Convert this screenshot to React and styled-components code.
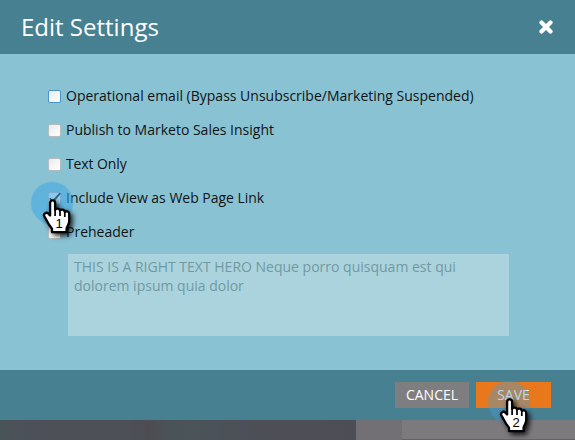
import React from "react";
import styled, { createGlobalStyle } from "styled-components";

const GlobalStyle = createGlobalStyle`
  * { box-sizing: border-box; }
  body { margin: 0; overflow: hidden; font-family: "Open Sans", "Noto Sans", sans-serif; }
`;

const Screen = styled.main`
  width: 575px;
  height: 440px;
  display: flex;
  flex-direction: column;
  overflow: hidden;
`;

const Header = styled.header`
  height: 54px;
  flex: none;
  display: flex;
  align-items: center;
  justify-content: space-between;
  padding: 0 22px 0 21px;
  background: #468091;
`;

const Title = styled.h1`
  margin: 0;
  color: #fff;
  font-size: 24px;
  line-height: 32px;
  font-weight: 400;
`;

const CloseButton = styled.button`
  display: flex;
  width: 14px;
  height: 14px;
  padding: 0;
  border: 0;
  background: none;
`;

const Body = styled.section`
  height: 316px;
  flex: none;
  padding: 25px 48px 0;
  background: #89c2d3;
`;

const Option = styled.label`
  position: relative;
  height: 34px;
  display: flex;
  align-items: center;
  gap: 5px;
  color: #101416;
  font-size: 14px;
  line-height: 20px;
  white-space: nowrap;
`;

const OptionLabel = styled.span`
  letter-spacing: ${(p) => p.$tracking || 0}px;
`;

const Box = styled.span`
  width: 13px;
  height: 13px;
  flex: none;
  border: 1px solid ${(p) => (p.$focused ? "#4a94cb" : "#b9bcbe")};
  border-radius: 2px;
  background: linear-gradient(135deg, #e9eaec, #fdfdfd 85%);
`;

const Preheader = styled.div`
  width: 441px;
  height: 82px;
  margin: 5px 0 0 20px;
  padding: 3px 5px 0 6px;
  background: #abd3dd;
  color: #709aa3;
  font-size: 14px;
  line-height: 19px;
  white-space: nowrap;
`;

const Footer = styled.footer`
  height: 50px;
  flex: none;
  display: flex;
  align-items: center;
  justify-content: flex-end;
  gap: 7px;
  padding-right: 24px;
  background: #468091;
`;

const Button = styled.button`
  position: relative;
  width: ${(p) => (p.$primary ? 75 : 74)}px;
  height: 26px;
  padding: 0;
  border: 0;
  background: ${(p) => (p.$primary ? "#e8781b" : "#7e7d80")};
  color: #fff;
  font: 14px/26px "Open Sans", sans-serif;
`;

const Backdrop = styled.div`
  height: 20px;
  display: grid;
  grid-template-columns: 356px 46px 1fr;
`;

const BackdropPart = styled.div`
  background: ${(p) => p.$fill};
  border-bottom: ${(p) => (p.$edge ? "1px solid #656367" : "0")};
`;

const Pointer = styled.svg`
  position: absolute;
  z-index: 2;
  left: ${(p) => p.$left}px;
  top: ${(p) => p.$top}px;
  width: 64px;
  height: 64px;
  overflow: visible;
  pointer-events: none;
`;

const HAND =
  "M7.1 16.5V4C7.1 .5 12.1 .5 12.1 4V10.8C13 9 16.5 9.3 17 11.4C18.4 10 21.4 10.5 21.8 12.8C23.6 11.6 26.2 12.6 26.2 15.2V22C26.2 25.2 24.2 27.2 23.6 29.4V33.2H9V29.7C6.8 27.2 4.8 23.8 3 20.2L1.3 17.4C0 14.8 3.2 12.8 5.2 14.4Z";

function StepPointer({ step, left, top, haloColor, haloOpacity }) {
  const shadow = `pointer-shadow-${step}`;
  const halo = `pointer-halo-${step}`;
  return (
    <Pointer $left={left} $top={top} viewBox="0 0 64 64" aria-hidden="true">
      <defs>
        <filter id={shadow} x="-40%" y="-40%" width="200%" height="200%">
          <feDropShadow dx="2.5" dy="2.5" stdDeviation="2.6" floodColor="#000" floodOpacity=".85" />
        </filter>
        <radialGradient id={halo}>
          <stop offset="0" stopColor={haloColor} stopOpacity={haloOpacity} />
          <stop offset=".92" stopColor={haloColor} stopOpacity={haloOpacity} />
          <stop offset="1" stopColor={haloColor} stopOpacity="0" />
        </radialGradient>
      </defs>
      <circle cx="22" cy="22" r="22" fill={`url(#${halo})`} />
      <g transform="translate(13 18)">
        <g filter={`url(#${shadow})`}>
          <path d={HAND} fill="#fff" stroke="#000" strokeWidth="2.3" strokeLinejoin="round" />
        </g>
        <path d="M12.1 10V17M17 11.2V17M21.8 12.8V18" fill="none" stroke="#000" strokeWidth="1.7" />
        <text x="16" y="29" textAnchor="middle" fill="#000" fontFamily="Liberation Sans, sans-serif" fontSize="13">
          {step}
        </text>
      </g>
    </Pointer>
  );
}

function CheckMark() {
  return (
    <svg width="11" height="11" viewBox="0 0 11 11" display="block" overflow="visible">
      <path d="M.8 5.4 3.8 8.6 11.2.2" fill="none" stroke="#1c2226" strokeWidth="2" />
    </svg>
  );
}

export default function App() {
  return (
    <>
      <GlobalStyle />
      <Screen>
        <Header>
          <Title>Edit Settings</Title>
          <CloseButton aria-label="Close">
            <svg width="14" height="14" viewBox="0 0 14 14">
              <path d="M2.5 2.5 11.5 11.5M11.5 2.5 2.5 11.5" stroke="#fff" strokeWidth="4.2" strokeLinecap="round" />
            </svg>
          </CloseButton>
        </Header>
        <Body>
          <Option><Box $focused /><OptionLabel>Operational email (Bypass Unsubscribe/Marketing Suspended)</OptionLabel></Option>
          <Option><Box /><OptionLabel>Publish to Marketo Sales Insight</OptionLabel></Option>
          <Option><Box /><OptionLabel $tracking={-0.1}>Text Only</OptionLabel></Option>
          <Option>
            <Box><CheckMark /></Box>
            <OptionLabel $tracking={-0.02}>Include View as Web Page Link</OptionLabel>
            <StepPointer step={1} left={-18} top={0} haloColor="#3aa5e4" haloOpacity={0.52} />
          </Option>
          <Option><Box /><OptionLabel>Preheader</OptionLabel></Option>
          <Preheader>
            THIS IS A RIGHT TEXT HERO Neque porro quisquam est qui<br />
            dolorem ipsum quia dolor
          </Preheader>
        </Body>
        <Footer>
          <Button>CANCEL</Button>
          <Button $primary>
            SAVE
            <StepPointer step={2} left={11} top={-2} haloColor="#4a9bd2" haloOpacity={0.4} />
          </Button>
        </Footer>
        <Backdrop>
          <BackdropPart $fill="linear-gradient(90deg, #495458, #4d5058 10%, #4d5057 36%, #4e4c53 42%, #4a5458 48%, #4b5359 58%, #4d4f57 70%, #4d4e55)" />
          <BackdropPart $fill="#727074" />
          <BackdropPart $fill="#7d7a7e" $edge />
        </Backdrop>
      </Screen>
    </>
  );
}
